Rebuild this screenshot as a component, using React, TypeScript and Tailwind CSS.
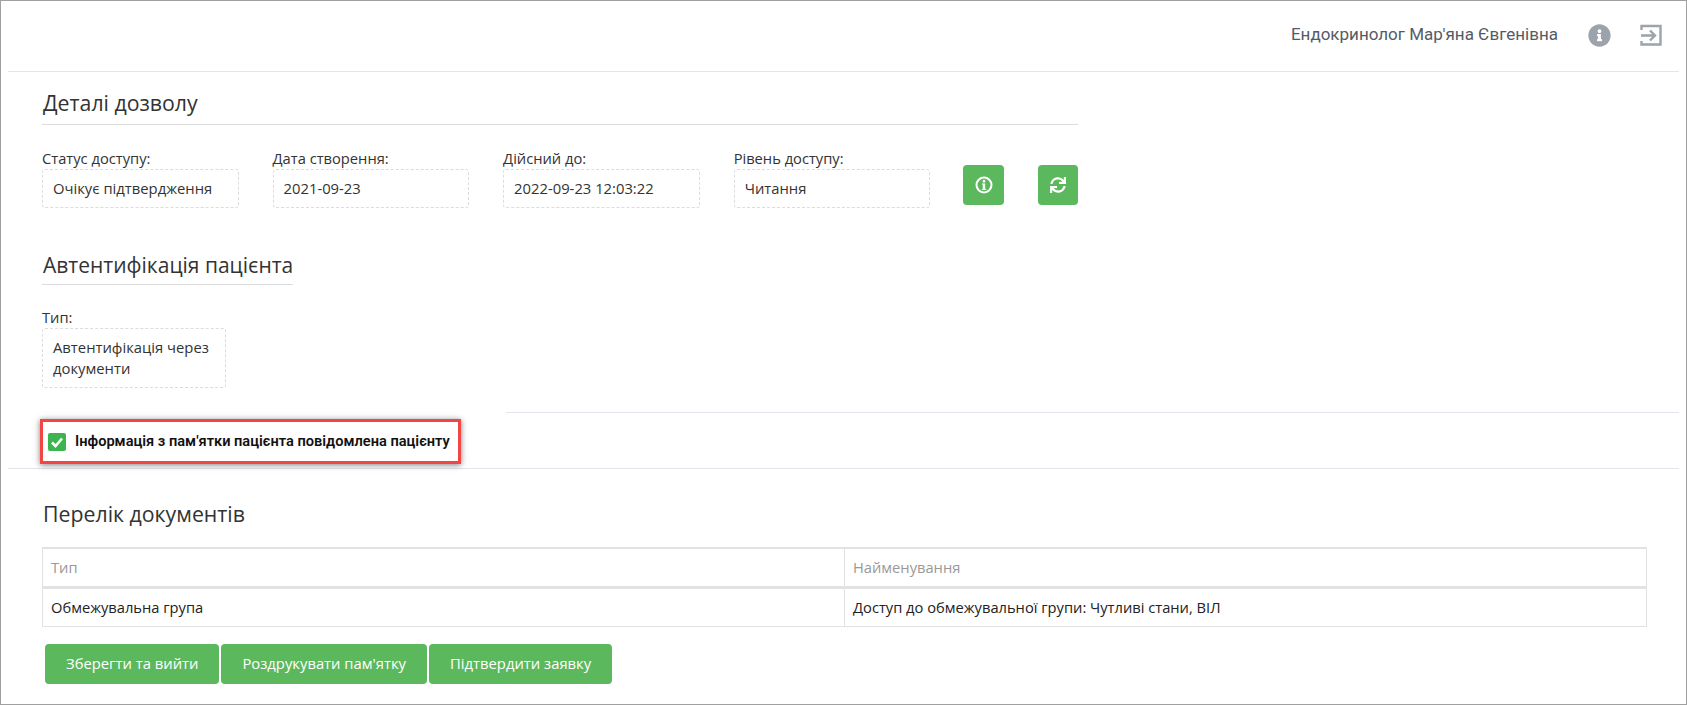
import { FaInfoCircle, FaSync } from "react-icons/fa";

const details = [
  { label: "Статус доступу:", value: "Очікує підтвердження" },
  { label: "Дата створення:", value: "2021-09-23" },
  { label: "Дійсний до:", value: "2022-09-23 12:03:22" },
  { label: "Рівень доступу:", value: "Читання" },
];

const actions = ["Зберегти та вийти", "Роздрукувати пам'ятку", "Підтвердити заявку"];

function Field({ label, value, width }: { label: string; value: string; width: string }) {
  return (
    <div className={width}>
      <div className="h-[21px] text-[14.700px] leading-[21px] text-[#333]">{label}</div>
      <div className="rounded-[3px] border border-dashed border-[#dcdcdc] px-[10px] py-[8px] text-[14.800px] leading-[21px] text-[#333]">
        {value}
      </div>
    </div>
  );
}

export default function App() {
  return (
    <div className="h-[705px] w-[1687px] overflow-hidden border border-[#a0a0a0] bg-white font-['Open_Sans',sans-serif]">
      {/* Top bar */}
      <div className="mx-[7px] flex h-[71px] items-center justify-end border-b border-[#e4e4ec] pb-[2px]">
        <span className="font-['Roboto',sans-serif] text-[17px] text-[#555b66]">Ендокринолог Мар'яна Євгенівна</span>
        <FaInfoCircle className="ml-[30px] text-[23px] text-[#9ca3ab]" />
        <svg className="ml-[29px] mr-[17px]" width="22" height="22" viewBox="0 0 22 22" fill="none" stroke="#9ca3ab" strokeWidth="2.400">
          <path d="M1.500 6V2h19v18.500h-19V17" />
          <path d="M1 11.500h13M10 6.500l5 5-5 5" />
        </svg>
      </div>

      {/* Details */}
      <div className="ml-[41px] mt-[13px] w-[1036px]">
        <h2 className="border-b border-[#dcdcdc] pb-[3px] pl-px text-[21.300px] leading-[36px] text-[#333]">Деталі дозволу</h2>
        <div className="mt-[23px] flex items-start">
          {details.map((d) => (
            <Field key={d.label} label={d.label} value={d.value} width="mr-[34px] w-[197px]" />
          ))}
          <button className="-ml-px mt-[17px] flex h-[40px] w-[41px] items-center justify-center rounded-[4px] bg-[#5cb85c]">
            <svg width="18" height="18" viewBox="0 0 18 18" fill="none">
              <circle cx="9" cy="9" r="7.500" stroke="white" strokeWidth="2" />
              <rect x="7.800" y="4" width="2.400" height="2.400" fill="white" />
              <path d="M7 7.500h3.200V13H11.200v1H6.800v-1h1V8.500H7z" fill="white" />
            </svg>
          </button>
          <button className="ml-[34px] mt-[17px] flex h-[40px] w-[40px] items-center justify-center rounded-[4px] bg-[#5cb85c]">
            <FaSync className="text-[16px] text-white" />
          </button>
        </div>
      </div>

      {/* Authentication */}
      <div className="ml-[41px] mt-[39px]">
        <h2 className="w-[251px] whitespace-nowrap border-b border-[#dcdcdc] pb-[1px] pl-px text-[21px] leading-[36px] text-[#333]">Автентифікація пацієнта</h2>
        <div className="mt-[22px]">
          <Field label="Тип:" value="Автентифікація через документи" width="w-[184px]" />
        </div>
      </div>

      <div className="ml-[505px] mr-[7px] mt-[24px] border-t border-[#e4e4ec]" />

      <div className="relative z-10 ml-[39px] mt-[6px] flex h-[45px] w-[421px] items-center border-[3px] border-[#f44545] bg-white pl-[5px] shadow-[0_1px_6px_rgba(0,0,0,0.5)]">
        <span className="flex h-[18px] w-[18px] items-center justify-center rounded-[2px] bg-[#3cb551]">
          <svg width="14" height="14" viewBox="0 0 14 14" fill="none" stroke="white" strokeWidth="2.600">
            <path d="M2 7.500l3.500 3.500L12 3.500" />
          </svg>
        </span>
        <span className="ml-[9px] whitespace-nowrap font-['Roboto',sans-serif] text-[14.600px] font-semibold text-[#111]">
          Інформація з пам'ятки пацієнта повідомлена пацієнту
        </span>
      </div>

      <div className="mx-[7px] mt-[4px] border-t border-[#e4e4ec]" />

      {/* Documents */}
      <div className="ml-[41px] mr-[40px] mt-[27px]">
        <h2 className="pl-px text-[21.300px] leading-[36px] text-[#333]">Перелік документів</h2>
        <table className="mt-[15px] w-[1605px] table-fixed border-collapse text-[14.700px]">
          <tbody>
            <tr className="h-[39px] border-b-[3px] border-[#e2e2e2] text-[#999]">
              <td className="w-[802px] border border-b-[3px] border-t-2 border-[#e2e2e2] px-[8px]">Тип</td>
              <td className="border border-b-[3px] border-t-2 border-[#e2e2e2] px-[8px]">Найменування</td>
            </tr>
            <tr className="h-[39px] text-[#222]">
              <td className="border border-[#e2e2e2] px-[8px]">Обмежувальна група</td>
              <td className="border border-[#e2e2e2] px-[8px]">Доступ до обмежувальної групи: Чутливі стани, ВІЛ</td>
            </tr>
          </tbody>
        </table>
        <div className="ml-[3px] mt-[17px] flex gap-[2px]">
          {actions.map((a) => (
            <button key={a} className="h-[40px] rounded-[4px] bg-[#5cb85c] px-[21px] text-[14.800px] text-white">
              {a}
            </button>
          ))}
        </div>
      </div>
    </div>
  );
}
